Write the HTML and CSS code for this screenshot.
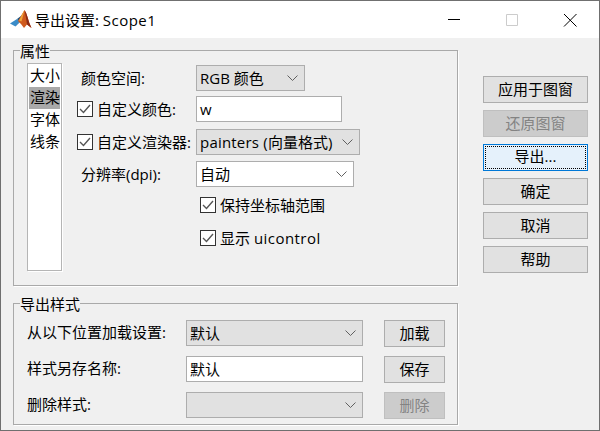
FILE: index.html
```html
<!DOCTYPE html>
<html lang="zh">
<head>
<meta charset="utf-8">
<title>导出设置: Scope1</title>
<link rel="stylesheet" href="styles.css">
</head>
<body>
<div class="window">
  <header class="titlebar">
    <svg class="logo" width="22" height="22" viewBox="0 0 22 22">
      <path d="M0 14.500 L7 10 L10 12.500 L5.500 17.500 Z" fill="#3a8cc8"/>
      <path d="M5.500 17.500 L10 12.500 L7 10 L11 7 L12 11 Z" fill="#17507f"/>
      <path d="M8 12 L14.500 1 Q16 3 17.500 8 Q19 14 21.500 19 L17 15.500 L14 19 Q11.500 15 8 12 Z" fill="#cf5a1e"/>
      <path d="M14.500 1 Q16 3 17.500 8 Q19 14 21.500 19 L17 15.500 Q16 8 14.500 1 Z" fill="#8c2b16"/>
      <path d="M9 11.500 L14.500 1 Q13 7 11.500 12.500 Z" fill="#f0a63a"/>
    </svg>
    <span class="title">导出设置: <span class="wide">Scope1</span></span>
    <div class="winbtns">
      <svg class="winbtn" width="58" height="38" viewBox="0 0 58 38"><path d="M23 18.500H35" stroke="#000"/></svg>
      <svg class="winbtn" width="58" height="38" viewBox="0 0 58 38"><path d="M23.500 13.500h11v11h-11z" fill="none" stroke="#ccc"/></svg>
      <svg class="winbtn" width="58" height="38" viewBox="0 0 58 38"><path d="M23 13L35.500 25.500M35.500 13L23 25.500" stroke="#000"/></svg>
    </div>
  </header>
  <div class="client">
    <div class="left">
      <section class="group group-props">
        <div class="legend">属性</div>
        <div class="props">
          <ul class="list">
            <li>大小</li>
            <li class="sel">渲染</li>
            <li>字体</li>
            <li>线条</li>
          </ul>
          <div class="form">
            <div class="row r1">
              <span class="label lab-plain">颜色空间:</span>
              <div class="select w-color">RGB 颜色<svg class="chev" width="11" height="6" viewBox="0 0 11 6"><path d="M.5 .5L5.500 5.500L10.500 .5" fill="none" stroke="#606060"/></svg></div>
            </div>
            <div class="row r2">
              <label class="label"><span class="check"><svg width="14" height="14" viewBox="0 0 14 14"><path d="M2 7L5.500 10.500L12 3" fill="none" stroke="#555" stroke-width="1.400"/></svg></span>自定义颜色:</label>
              <div class="input w-custom">w</div>
            </div>
            <div class="row r3">
              <label class="label"><span class="check"><svg width="14" height="14" viewBox="0 0 14 14"><path d="M2 7L5.500 10.500L12 3" fill="none" stroke="#555" stroke-width="1.400"/></svg></span>自定义渲染器:</label>
              <div class="select w-render"><span class="wide-sm">painters (</span>向量格式)<svg class="chev" width="11" height="6" viewBox="0 0 11 6"><path d="M.5 .5L5.500 5.500L10.500 .5" fill="none" stroke="#606060"/></svg></div>
            </div>
            <div class="row r4">
              <span class="label lab-plain">分辨率(dpi):</span>
              <div class="select white w-dpi">自动<svg class="chev" width="11" height="6" viewBox="0 0 11 6"><path d="M.5 .5L5.500 5.500L10.500 .5" fill="none" stroke="#606060"/></svg></div>
            </div>
            <div class="row r5 indent">
              <label class="label"><span class="check"><svg width="14" height="14" viewBox="0 0 14 14"><path d="M2 7L5.500 10.500L12 3" fill="none" stroke="#555" stroke-width="1.400"/></svg></span>保持坐标轴范围</label>
            </div>
            <div class="row r6 indent">
              <label class="label"><span class="check"><svg width="14" height="14" viewBox="0 0 14 14"><path d="M2 7L5.500 10.500L12 3" fill="none" stroke="#555" stroke-width="1.400"/></svg></span><span>显示 <span class="wide">uicontrol</span></span></label>
            </div>
          </div>
        </div>
      </section>
      <section class="group group-style">
        <div class="legend">导出样式</div>
        <div class="style-grid">
          <span class="slabel">从以下位置加载设置:</span>
          <div class="select w-style">默认<svg class="chev" width="11" height="6" viewBox="0 0 11 6"><path d="M.5 .5L5.500 5.500L10.500 .5" fill="none" stroke="#606060"/></svg></div>
          <button class="btn small">加载</button>
          <span class="slabel">样式另存名称:</span>
          <div class="input w-style">默认</div>
          <button class="btn small">保存</button>
          <span class="slabel">删除样式:</span>
          <div class="select w-style"><svg class="chev" width="11" height="6" viewBox="0 0 11 6"><path d="M.5 .5L5.500 5.500L10.500 .5" fill="none" stroke="#606060"/></svg></div>
          <button class="btn small disabled">删除</button>
        </div>
      </section>
    </div>
    <div class="actions">
      <button class="btn">应用于图窗</button>
      <button class="btn disabled">还原图窗</button>
      <button class="btn focus"><span>导出...</span></button>
      <button class="btn">确定</button>
      <button class="btn">取消</button>
      <button class="btn">帮助</button>
    </div>
  </div>
</div>
</body>
</html>
```
FILE: styles.css
```css
* { box-sizing: border-box; }
html, body { margin: 0; padding: 0; }
body {
  width: 600px; height: 431px; overflow: hidden;
  background: #1f5f70;
  font: 15px/20px "Open Sans", "Noto Sans CJK SC", sans-serif;
  color: #000;
}
.window {
  width: 599.5px; height: 431px;
  border: 1px solid #6f6f6f; border-top-color: #707070;
  background: #f0f0f0;
  display: flex; flex-direction: column;
}
.titlebar {
  height: 37px; flex: none; background: #fff;
  display: flex; align-items: center; padding-left: 9px;
}
.logo { flex: none; filter: blur(.4px); }
.title { margin-left: 3px; font-size: 15px; }
.wide { letter-spacing: .45px; }
.wide-sm { letter-spacing: .2px; }
.winbtns { margin-left: auto; display: flex; }
.winbtn { display: block; }

.client { display: flex; padding-left: 12px; flex: 1; }
.left { width: 446px; flex: none; padding-top: 12px; }
.group {
  border: 1px solid #a9a9a9;
  box-shadow: 1px 1px 0 #fff;
  width: 445px;
}
.group-props { height: 236px; }
.group-style { height: 122px; margin-top: 17px; }
.legend {
  background: #f0f0f0; width: fit-content;
  margin: -10px 0 0 6px; padding: 0; height: 20px; line-height: 20px;
}
.props { display: flex; padding: 2px 0 0 13px; }
.list {
  list-style: none; margin: 0; padding: 1px 1px; width: 35px; height: 208px;
  background: #fff; border: 1px solid #b5b5b5; box-shadow: 1px 1px 0 #fff;
  flex: none;
}
.list li { height: 22px; line-height: 21px; padding-left: 1px; white-space: nowrap; overflow: hidden; }
.list .sel { background: #a9a9a9; }

.form { margin-left: 15px; padding-top: 2px; }
.row { display: flex; align-items: center; height: 26px; }
.r2 { margin-top: 5px; }
.r3 { margin-top: 7px; }
.r4 { margin-top: 6px; }
.r5 { margin-top: 6px; height: 24px; }
.r6 { margin-top: 9px; height: 24px; }
.label { width: 119px; flex: none; display: flex; align-items: center; white-space: nowrap; }
.lab-plain { padding-left: 4px; }
.indent { padding-left: 123px; }
.indent .label { width: auto; }
.check {
  width: 16px; height: 16px; border: 1px solid #333; background: #fff;
  margin-right: 4px; flex: none; display: flex;
}
.check svg { display: block; margin: 0; }

.select, .input {
  height: 26px; border: 1px solid #adadad; line-height: 24px; white-space: nowrap;
  padding-left: 3px; flex: none;
}
.select { background: #e1e1e1; display: flex; align-items: center; padding-right: 6px; }
.white { background: #fff; }
.input { background: #fff; box-shadow: none; }
.w-color { width: 109px; }
.w-custom { width: 146px; }
.w-render { width: 164px; }
.w-dpi { width: 158px; }
.w-style { width: 177px; }
.chev { flex: none; margin-left: auto; }

.style-grid {
  display: grid; grid-template-columns: 159px 177px 61px; column-gap: 0;
  row-gap: 9px; padding: 6px 0 0 13px; align-items: start;
}
.slabel { height: 26px; line-height: 25px; white-space: nowrap; }
.small { margin-left: 21px; width: 61px; }

.actions { width: 105px; margin-left: 24px; padding-top: 38px; display: flex; flex-direction: column; gap: 7px; }
.btn {
  height: 27px; width: 105px; padding: 0 0 2px; border: 1px solid #adadad; background: #e1e1e1;
  font: inherit; color: #000; display: block;
}
.btn.small { width: 61px; }
.disabled { background: #ccc; border-color: #bfbfbf; color: #838383; }
.focus { background: #e5f1fb; border-color: #0078d7; padding: 1px; }
.focus span { display: block; height: 100%; outline: 1px dotted #000; outline-offset: -1px; line-height: 21px; }
```
